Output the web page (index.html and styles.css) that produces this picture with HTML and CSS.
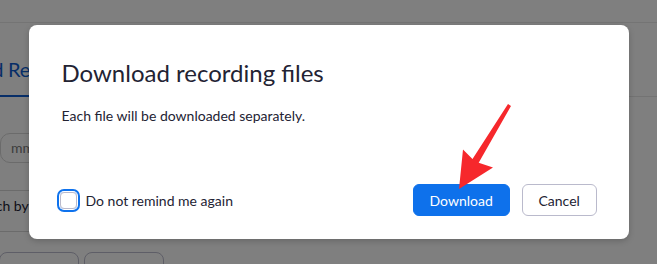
FILE: index.html
```html
<!DOCTYPE html>
<html lang="en">
  <head>
    <meta charset="UTF-8" />
    <meta name="viewport" content="width=device-width, initial-scale=1.0" />
    <title>Recordings</title>
    <link rel="stylesheet" href="styles.css">
  </head>
  <body>
    <div class="page">
      <div class="topbar"></div>
      <div class="tabs">
        <span class="tab active">Cloud Recordings</span>
      </div>
      <div class="filters">
        <div class="date-input">mm/dd/yyyy</div>
      </div>
      <div class="search-row">
        <div class="search-box">Search by ID</div>
      </div>
      <div class="actions">
        <div class="ghost-btn"></div>
        <div class="ghost-btn"></div>
      </div>
    </div>

    <div class="backdrop">
      <div class="dialog">
        <h2 class="dialog-title">Download recording files</h2>
        <p class="dialog-text">Each file will be downloaded separately.</p>
        <div class="dialog-footer">
          <label class="remind">
            <span class="checkbox"></span>
            Do not remind me again
          </label>
          <div class="buttons">
            <button class="btn btn-primary">Download</button>
            <button class="btn btn-default">Cancel</button>
          </div>
        </div>
      </div>
    </div>

    <svg class="arrow" width="657" height="264" viewBox="0 0 657 264">
      <polygon points="508,104 511,106 478.7,162.8 493,167.5 459,189 463,149.5 472.5,159" fill="#f6282c" />
    </svg>
  </body>
</html>
```

FILE: styles.css
```css
body {
  margin: 0;
  width: 657px;
  height: 264px;
  overflow: hidden;
  font-family: Lato, "Noto Sans", sans-serif;
  position: relative;
}
.page {
  background-color: #ffffff;
  height: 264px;
  overflow: hidden;
}
.topbar {
  height: 22px;
  border-bottom: 1px solid #e8e8e8;
}
.tabs {
  height: 73px;
  border-bottom: 1px solid #e6e6e6;
  display: flex;
  align-items: flex-end;
}
.tab {
  margin-left: -47px;
  padding: 0 12px 14px 0;
  font-size: 20px;
  line-height: 24px;
  letter-spacing: -0.3px;
  color: #0e5dd0;
  border-bottom: 2px solid #0e5dd0;
  margin-bottom: -1px;
}
.filters {
  padding-top: 36px;
}
.date-input {
  width: 140px;
  height: 28px;
  border: 1px solid #d6d6d6;
  border-radius: 10px;
  font-size: 14px;
  line-height: 28px;
  padding-left: 10px;
  color: #7a7a7a;
}
.search-row {
  padding-top: 27px;
}
.search-box {
  margin-left: -40px;
  width: 150px;
  height: 40px;
  border: 1px solid #d6d6d6;
  border-radius: 10px;
  font-size: 14px;
  line-height: 30px;
  padding-left: 8px;
  color: #232333;
}
.actions {
  display: flex;
  gap: 5px;
  padding-top: 20px;
}
.ghost-btn {
  width: 78px;
  height: 30px;
  border: 1px solid #bcbcce;
  border-radius: 8px;
}
.ghost-btn:first-child {
  margin-left: -1px;
}
.backdrop {
  position: absolute;
  top: 0;
  left: 0;
  right: 0;
  bottom: 0;
  background-color: rgba(0, 0, 0, 0.5);
  display: flex;
  align-items: center;
  justify-content: center;
}
.dialog {
  width: 600px;
  height: 214px;
  box-sizing: border-box;
  padding: 33px 32px 23px 33px;
  background-color: #ffffff;
  border-radius: 8px;
  box-shadow: 0 2px 6px rgba(0, 0, 0, 0.2);
  display: flex;
  flex-direction: column;
}
.dialog-title {
  margin: 0;
  font-size: 24px;
  line-height: 30px;
  font-weight: normal;
  color: #232333;
}
.dialog-text {
  margin: 18px 0 0;
  font-size: 14px;
  line-height: 20px;
  color: #232333;
}
.dialog-footer {
  margin-top: auto;
  display: flex;
  justify-content: space-between;
  align-items: center;
}
.remind {
  display: flex;
  align-items: center;
  gap: 9px;
  font-size: 14px;
  color: #232333;
  margin-left: -2px;
}
.checkbox {
  width: 15px;
  height: 15px;
  border: 1px solid #babacc;
  border-radius: 4px;
  box-shadow: 0 0 0 1px #ffffff, 0 0 0 3px #0e72ed;
}
.buttons {
  display: flex;
  gap: 12px;
}
.btn {
  height: 32px;
  padding: 0 16px;
  font-family: Lato, "Noto Sans", sans-serif;
  font-size: 14px;
  border-radius: 6px;
  cursor: pointer;
}
.btn-primary {
  width: 97px;
  background-color: #0e71eb;
  border: 1px solid #0e71eb;
  color: #ffffff;
}
.btn-default {
  width: 75px;
  background-color: #ffffff;
  border: 1px solid #babacc;
  color: #232333;
}
.arrow {
  position: absolute;
  top: 0;
  left: 0;
}
```
